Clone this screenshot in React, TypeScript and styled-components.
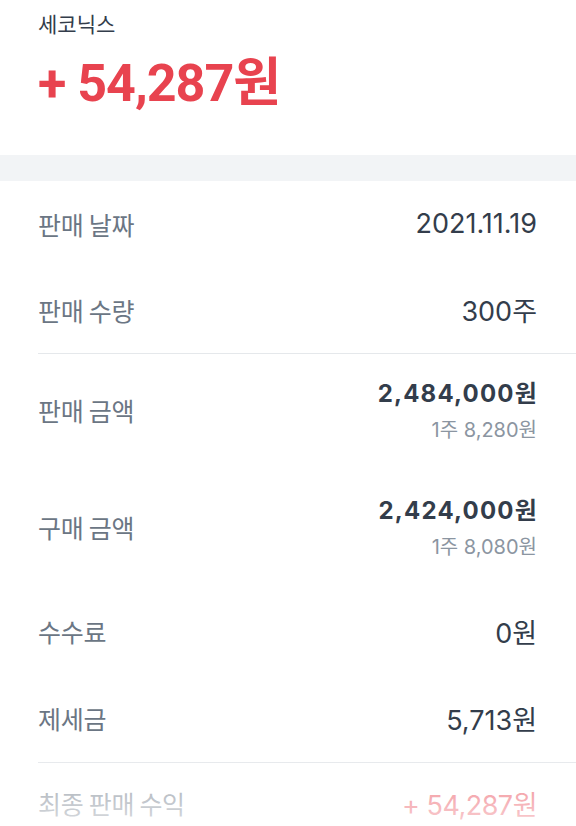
import React from "react";
import styled, { createGlobalStyle } from "styled-components";

const Global = createGlobalStyle`
  html, body { margin: 0; padding: 0; background: #ffffff; }
  body { font-family: "Inter", "Noto Sans CJK KR", sans-serif; -webkit-font-smoothing: antialiased; }
  * { box-sizing: border-box; }
`;

const Page = styled.div`
  position: relative;
  width: 576px;
  height: 826px;
  overflow: hidden;
  background: #fff;
`;

const Header = styled.header`
  padding: 9px 38px 0 38px;
  height: 155px;
  display: flex;
  flex-direction: column;
`;

const Stock = styled.div`
  font-size: 21px;
  line-height: 28px;
  color: #333d4b;
  font-family: "Noto Sans CJK KR", sans-serif;
`;

const Profit = styled.div`
  margin-top: 16px;
  font-family: "Roboto", "Noto Sans CJK KR", sans-serif;
  font-size: 52px;
  line-height: 62px;
  font-weight: 700;
  color: #e8434f;
  letter-spacing: -1px;
`;

const Band = styled.div`
  height: 26px;
  background: #f2f4f6;
`;

const List = styled.section`
  padding-left: 38px;
  display: flex;
  flex-direction: column;
`;

const Row = styled.div<{ $h: number }>`
  height: ${(p) => p.$h}px;
  padding-right: 39px;
  display: flex;
  align-items: center;
  justify-content: space-between;
`;

const Label = styled.span<{ $up?: number }>`
  font-family: "Noto Sans CJK KR", sans-serif;
  font-size: 25px;
  letter-spacing: -0.3px;
  color: #6b7684;
  margin-top: ${(p) => -(p.$up || 0)}px;
`;

const Value = styled.span`
  font-size: 27px;
  color: #333d4b;
`;

const Stack = styled.div`
  display: flex;
  flex-direction: column;
  align-items: flex-end;
`;

const Strong = styled.span`
  font-size: 24px;
  line-height: 34px;
  font-weight: 700;
  letter-spacing: 1.2px;
  margin-right: -1px;
  color: #333d4b;
`;

const Sub = styled.span`
  font-size: 20px;
  line-height: 38px;
  color: #8b95a1;
`;

const Divider = styled.hr`
  margin: 0;
  border: none;
  height: 1px;
  background: #e5e8eb;
`;

const FinalValue = styled.span`
  font-size: 27px;
  letter-spacing: -0.5px;
  color: #e8434f;
`;

const Fade = styled.div`
  position: absolute;
  left: 0;
  right: 0;
  bottom: 0;
  height: 70px;
  background: linear-gradient(to bottom, rgba(255,255,255,0) 0%, rgba(255,255,255,0.5) 45%, rgba(255,255,255,0.75) 100%);
  pointer-events: none;
`;

export default function App() {
  return (
    <Page>
      <Global />
      <Header>
        <Stock>세코닉스</Stock>
        <Profit>+ 54,287원</Profit>
      </Header>
      <Band />
      <List>
        <Row $h={85}>
          <Label>판매 날짜</Label>
          <Value>2021.11.19</Value>
        </Row>
        <Row $h={87}>
          <Label>판매 수량</Label>
          <Value>300주</Value>
        </Row>
        <Divider />
        <Row $h={117}>
          <Label $up={6}>판매 금액</Label>
          <Stack>
            <Strong>2,484,000원</Strong>
            <Sub>1주 8,280원</Sub>
          </Stack>
        </Row>
        <Row $h={117}>
          <Label $up={6}>구매 금액</Label>
          <Stack>
            <Strong>2,424,000원</Strong>
            <Sub>1주 8,080원</Sub>
          </Stack>
        </Row>
        <Row $h={86}>
          <Label>수수료</Label>
          <Value>0원</Value>
        </Row>
        <Row $h={88}>
          <Label>제세금</Label>
          <Value>5,713원</Value>
        </Row>
        <Divider />
        <Row $h={80}>
          <Label>최종 판매 수익</Label>
          <FinalValue>+ 54,287원</FinalValue>
        </Row>
      </List>
      <Fade />
    </Page>
  );
}
